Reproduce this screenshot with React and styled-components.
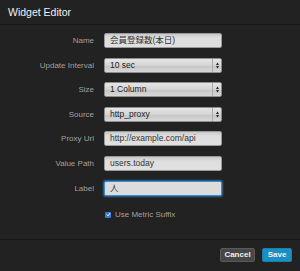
import styled, { createGlobalStyle } from "styled-components";

const GlobalStyle = createGlobalStyle`
  html, body {
    margin: 0;
    padding: 0;
    background: #222222;
  }
  body {
    font-family: "Liberation Sans", Arial, "Noto Sans CJK JP", sans-serif;
  }
`;

const Modal = styled.div`
  width: 300px;
  height: 271px;
  background: #222222;
  display: flex;
  flex-direction: column;
  box-sizing: border-box;
`;

const Header = styled.div`
  height: 25px;
  box-sizing: border-box;
  border-bottom: 1px solid #161616;
  padding: 6px 8px 0 8px;
`;

const Title = styled.div`
  color: #f2f2f2;
  font-size: 10.5px;
  line-height: 13px;
`;

const Body = styled.div`
  flex: 1;
  display: flex;
  flex-direction: column;
  gap: 9.6px;
  padding-top: 8px;
`;

const Row = styled.div`
  display: flex;
  align-items: center;
  height: 15px;
`;

const Label = styled.label`
  width: 94px;
  padding-right: 10px;
  text-align: right;
  color: #a0a0a0;
  font-size: 8px;
`;

const Input = styled.div`
  width: 118px;
  height: 15px;
  box-sizing: border-box;
  border-radius: 2px;
  background: ${(p) => (p.$focus ? "#dcdcdc" : "linear-gradient(#c8c8c8, #dedede 30%, #e0e0e0)")};
  border: 1px solid ${(p) => (p.$focus ? "#3a8ed6" : "#9a9a9a")};
  box-shadow: ${(p) => (p.$focus ? "0 0 2px 1px rgba(60,150,230,0.6)" : "none")};
  color: #333;
  font-size: 8.5px;
  line-height: 13px;
  padding-left: 5px;
  font-family: "Liberation Sans", Arial, "Noto Sans CJK JP", sans-serif;
  white-space: nowrap;
  overflow: hidden;
`;

const Select = styled.div`
  width: 118px;
  height: 15px;
  box-sizing: border-box;
  border-radius: 2px;
  border: 1px solid #8e8e8e;
  background: linear-gradient(#e6e6e6, #d4d4d4 50%, #c6c6c6 55%, #d8d8d8);
  display: flex;
  color: #222;
  font-size: 8.5px;
  line-height: 13px;
`;

const SelectText = styled.div`
  flex: 1;
  padding-left: 5px;
`;

const Arrows = styled.div`
  width: 8px;
  border-left: 1px solid #aaaaaa;
  display: flex;
  align-items: center;
  justify-content: center;
`;

const CheckRow = styled.div`
  display: flex;
  align-items: center;
  padding-left: 105px;
  margin-top: 5px;
  gap: 4px;
  color: #a0a0a0;
  font-size: 8px;
`;

const Box = styled.span`
  width: 6px;
  height: 6px;
  border-radius: 1px;
  background: #2f7fd0;
  display: flex;
  align-items: center;
  justify-content: center;
`;

const Footer = styled.div`
  height: 32px;
  box-sizing: border-box;
  border-top: 1px solid #161616;
  display: flex;
  justify-content: flex-end;
  align-items: flex-start;
  gap: 7px;
  padding: 8px 8px 0 0;
`;

const Button = styled.button`
  height: 14px;
  padding: 0;
  width: ${(p) => (p.$primary ? "30px" : "35px")};
  border-radius: 2px;
  border: 1px solid ${(p) => (p.$primary ? "#1a7fae" : "#5a5a5a")};
  background: ${(p) => (p.$primary ? "#1b8ec4" : "#474747")};
  color: #f0f0f0;
  font-size: 8px;
  font-weight: bold;
  font-family: "Liberation Sans", Arial, sans-serif;
  line-height: 12px;
`;

const ArrowIcon = () => (
  <svg width="3" height="7" viewBox="0 0 3 7">
    <path d="M0 3 L1.5 0.5 L3 3 Z" fill="#222" />
    <path d="M0 4 L1.5 6.5 L3 4 Z" fill="#222" />
  </svg>
);

const fields = [
  { label: "Name", value: "会員登録数(本日)" },
  { label: "Update Interval", value: "10 sec", select: true },
  { label: "Size", value: "1 Column", select: true },
  { label: "Source", value: "http_proxy", select: true },
  { label: "Proxy Url", value: "http://example.com/api" },
  { label: "Value Path", value: "users.today" },
  { label: "Label", value: "人", focus: true },
];

export default function App() {
  return (
    <>
      <GlobalStyle />
      <Modal>
        <Header>
          <Title>Widget Editor</Title>
        </Header>
        <Body>
          {fields.map((f) => (
            <Row key={f.label}>
              <Label>{f.label}</Label>
              {f.select ? (
                <Select>
                  <SelectText>{f.value}</SelectText>
                  <Arrows>
                    <ArrowIcon />
                  </Arrows>
                </Select>
              ) : (
                <Input $focus={f.focus}>{f.value}</Input>
              )}
            </Row>
          ))}
          <CheckRow>
            <Box>
              <svg width="5" height="5" viewBox="0 0 5 5">
                <path d="M0.8 2.6 L2 3.8 L4.2 1" stroke="#fff" strokeWidth="1" fill="none" />
              </svg>
            </Box>
            Use Metric Suffix
          </CheckRow>
        </Body>
        <Footer>
          <Button>Cancel</Button>
          <Button $primary>Save</Button>
        </Footer>
      </Modal>
    </>
  );
}
